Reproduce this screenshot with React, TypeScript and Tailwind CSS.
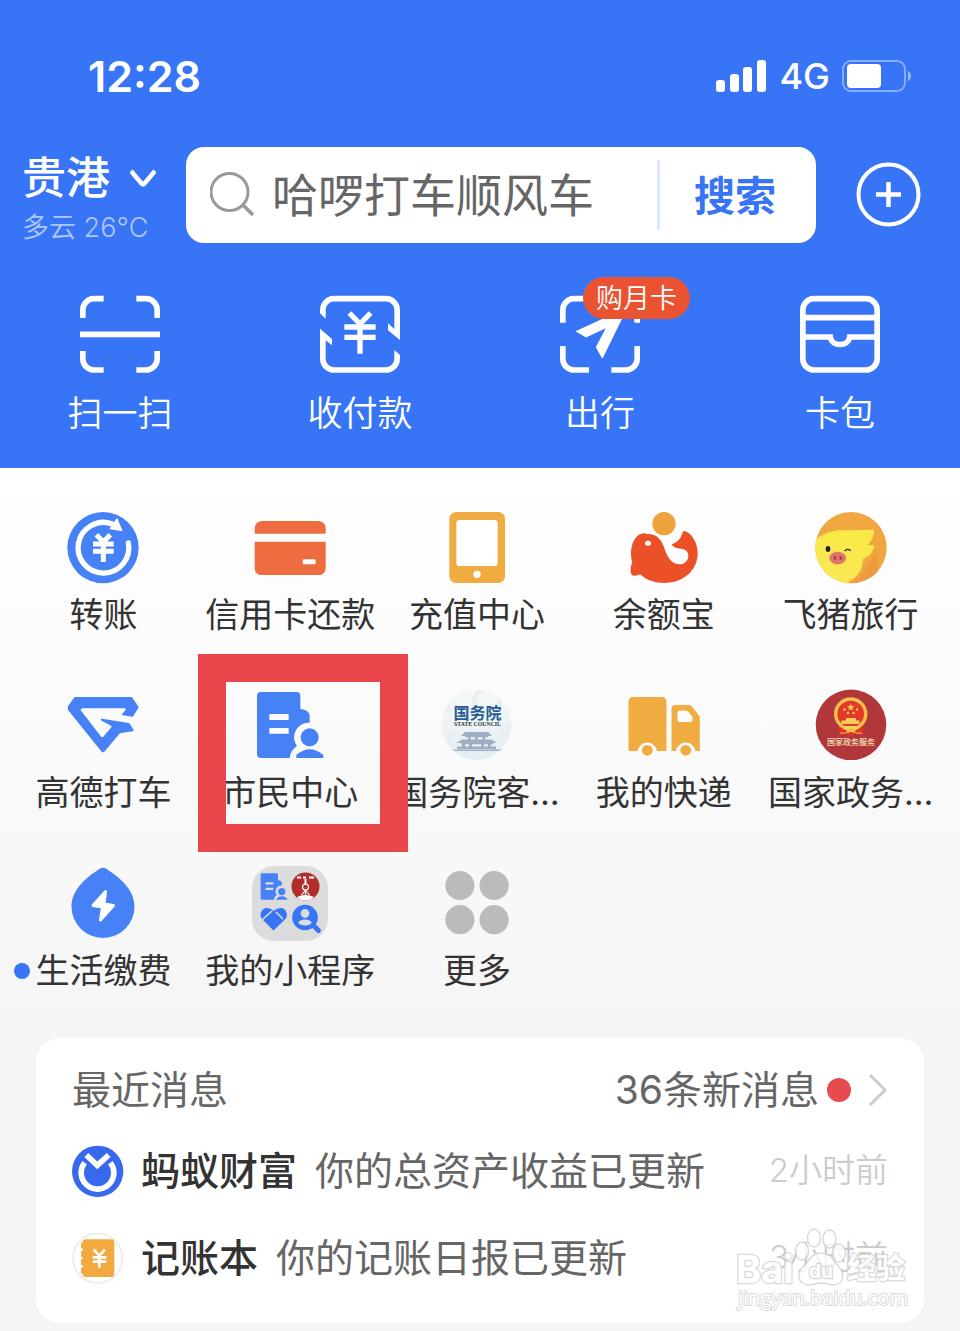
import type { ReactNode } from "react";

const BLUE = "#3875f6";

function StatusBar() {
  return (
    <div className="flex h-14 items-center justify-between pl-[88px] pr-12">
      <span className="text-[43px] leading-none font-semibold">12:28</span>
      <div className="flex items-center gap-3">
        <svg className="h-8 w-[52px]" viewBox="0 0 52 32" fill="currentColor" aria-hidden="true">
          <rect x="1" y="20" width="9" height="12" rx="3" />
          <rect x="15" y="14" width="9" height="18" rx="3" />
          <rect x="28" y="7" width="9" height="25" rx="3" />
          <rect x="42" y="0" width="9" height="32" rx="3" />
        </svg>
        <span className="text-[36px] leading-none font-medium">4G</span>
        <svg className="h-[33px] w-[70px]" viewBox="0 0 70 33" fill="none" aria-hidden="true">
          <rect x="1" y="1" width="62" height="30" rx="8" stroke="#fff" strokeOpacity="0.4" strokeWidth="2" />
          <rect x="5" y="4" width="34" height="24" rx="4" fill="#fff" />
          <path d="M66 11v10c4-2 4-8 0-10z" fill="#fff" fillOpacity="0.5" />
        </svg>
      </div>
    </div>
  );
}

function SearchRow() {
  return (
    <div className="flex items-start pl-[22px] pr-[38px]">
      <div className="w-[164px] shrink-0 pt-1">
        <button type="button" className="flex items-center gap-5 text-[44px] leading-[54px] font-medium">
          贵港
          <svg className="h-[18px] w-[26px]" viewBox="0 0 26 18" fill="none" aria-hidden="true">
            <path d="M1 2 11.500 14.500Q13 16 14.500 14.500L25 2" stroke="#fff" strokeWidth="4.500" />
          </svg>
        </button>
        <p className="text-[27px] leading-[46px] font-[350] text-white/60">多云 26°C</p>
      </div>
      <form className="flex h-24 min-w-0 flex-1 items-center rounded-[18px] bg-white pl-6" onSubmit={(e) => e.preventDefault()}>
        <svg className="size-[46px] shrink-0" viewBox="0 0 46 46" fill="none" stroke="#999" strokeWidth="3" aria-hidden="true">
          <circle cx="19.500" cy="20" r="18.500" />
          <path d="m33 33 10 10" strokeWidth="3.500" />
        </svg>
        <input
          type="search"
          aria-label="搜索"
          placeholder="哈啰打车顺风车"
          className="ml-4 min-w-0 flex-1 bg-transparent text-[46px] font-normal text-[#666] outline-none placeholder:text-[#666]"
        />
        <div className="h-[70px] w-[3px] shrink-0 rounded-full bg-[#dfe9fd]" />
        <button type="submit" className="w-[156px] shrink-0 pt-1 pr-1.5 text-center text-[41px] font-bold text-[#3875f6]">
          搜索
        </button>
      </form>
      <button type="button" aria-label="更多功能" className="ml-10 flex h-24 shrink-0 items-center">
        <svg className="size-[66px]" viewBox="0 0 66 66" fill="none" stroke="#fff" strokeWidth="4" aria-hidden="true">
          <circle cx="32.500" cy="32.500" r="30" />
          <path d="M32.500 20v25M20 32.500h25" strokeWidth="4.500" />
        </svg>
      </button>
    </div>
  );
}

function LineIcon({ children }: { children: ReactNode }) {
  return (
    <svg className="size-20" viewBox="0 0 240 240" fill="none" stroke="#fff" strokeWidth="17" aria-hidden="true">
      {children}
    </svg>
  );
}

const quickActions: { label: string; badge?: string; icon: ReactNode }[] = [
  {
    label: "扫一扫",
    icon: (
      <LineIcon>
        <path d="M8.500 69V45a34 34 0 0 1 34-34H71M169 11h28.500a34 34 0 0 1 34 34v24M231.500 168v23a34 34 0 0 1-34 34H169M71 225H42.500a34 34 0 0 1-34-34v-23M0 118h240" />
      </LineIcon>
    ),
  },
  {
    label: "收付款",
    icon: (
      <LineIcon>
        <path d="M8.500 54V45a34 34 0 0 1 34-34h155a34 34 0 0 1 34 34v60M231.500 182v9a34 34 0 0 1-34 34h-155a34 34 0 0 1-34-34v-60" />
        <g fill="#fff" stroke="none">
          <path d="M0 52h17v19L0 55zM240 100v35l-36-29V85l19 17zM0 135v-34l36 31v19l-19-15zM223 184v-19l17 15v6z" />
        </g>
        <path d="m88 54 32 33 32-33M120 84v92M73 96h94M73 127h94" strokeWidth="16" />
      </LineIcon>
    ),
  },
  {
    label: "出行",
    badge: "购月卡",
    icon: (
      <LineIcon>
        <path d="M8.500 83V45a34 34 0 0 1 34-34H87M154 11h43.500a34 34 0 0 1 34 34v38M231.500 153v38a34 34 0 0 1-34 34H154M87 225H42.500a34 34 0 0 1-34-34v-38" />
        <path d="m49 109 81-37 68-28-71 145-18-32 31-60-62 29z" fill="#fff" stroke="#fff" strokeWidth="3" strokeLinejoin="round" />
      </LineIcon>
    ),
  },
  {
    label: "卡包",
    icon: (
      <LineIcon>
        <rect x="8.500" y="11" width="223" height="214" rx="34" />
        <path d="M8 68h224M8 126h83c4 30 54 30 58 0h83" />
      </LineIcon>
    ),
  },
];

function QuickActions() {
  return (
    <nav className="mt-11 grid grid-cols-4">
      {quickActions.map((item) => (
        <a key={item.label} href="#" className="flex flex-col items-center">
          <span className="relative">
            {item.icon}
            {item.badge ? (
              <span className="absolute -top-[18px] left-[23px] h-[42px] rounded-full bg-[#ea5332] px-[13px] pt-px text-[27px] leading-[42px] font-[350] whitespace-nowrap">
                {item.badge}
              </span>
            ) : null}
          </span>
          <span className="mt-[14px] text-[35px] leading-[48px] font-[350]">{item.label}</span>
        </a>
      ))}
    </nav>
  );
}

function AppIcon({ box = 228, children }: { box?: 76 | 228; children: ReactNode }) {
  return (
    <svg className="size-[76px]" viewBox={`0 0 ${box} ${box}`} aria-hidden="true">
      {children}
    </svg>
  );
}

function CitizenShape() {
  return (
    <g fill="#4682f6">
      <path
        fillRule="evenodd"
        d="M27 12h106q12 0 12 12v39q13 1 21 7 7 6 7 16v18a44 44 0 0 0-38 70q-20 13-22 36H27q-12 0-12-12V24q0-12 12-12zM52 78v18h58V78zm0 42v17h58v-17z"
      />
      <circle cx="173" cy="148" r="27" />
      <path d="M133 210v-9q40-34 81 0v9z" />
    </g>
  );
}

const apps: { label: string; dot?: boolean; highlighted?: boolean; icon: ReactNode }[] = [
  {
    label: "转账",
    icon: (
      <AppIcon>
        <circle cx="114" cy="113" r="107" fill="#4682f6" />
        <g fill="none" stroke="#fff" strokeWidth="16">
          <path d="M190 99A76 76 0 1 1 142 42" strokeLinecap="round" />
          <path d="m94 74 21 22 21-22M115 90v66M84 102h62M84 124h62" strokeWidth="15" />
        </g>
        <path d="m156 26 15 36-36-6z" fill="#fff" stroke="#fff" strokeWidth="3" strokeLinejoin="round" />
      </AppIcon>
    ),
  },
  {
    label: "信用卡还款",
    icon: (
      <AppIcon>
        <path d="M30 33h169q22 2 22 24v14H8V57q0-22 22-24zM8 95h213v78q0 22-22 22H30q-22 0-22-22zM156 148q-4 0-4 4v7q0 4 4 4h31q4 0 4-4v-7q0-4-4-4z" fill="#ed6d41" fillRule="evenodd" />
      </AppIcon>
    ),
  },
  {
    label: "充值中心",
    icon: (
      <AppIcon>
        <rect x="31" y="6" width="167" height="213" rx="20" fill="#f1ac41" />
        <rect x="52" y="30" width="124" height="138" rx="10" fill="#fff" />
        <circle cx="114" cy="193" r="11" fill="#fff" />
      </AppIcon>
    ),
  },
  {
    label: "余额宝",
    icon: (
      <AppIcon>
        <circle cx="114" cy="41" r="35" fill="#efa33c" />
        <path
          d="M51 70C30 72 15 100 15 130c0 12 2 22 4 28-7 12-6 28-3 34 5 9 19 5 27 1 18 18 44 26 72 26 57 0 100-38 100-89 0-35-20-60-38-67-6 0-8 5-10 12-5 15-15 22-30 28 4 9 13 13 28 13 16 1 23 11 22 24-2 15-16 24-29 23-22-1-35-23-43-48-9-30-26-45-53-43-4-2-8-3-11-2z"
          fill="#eb5027"
        />
        <ellipse cx="66" cy="100" rx="9" ry="8" fill="#fff" />
      </AppIcon>
    ),
  },
  {
    label: "飞猪旅行",
    icon: (
      <AppIcon>
        <defs>
          <clipPath id="pig-clip">
            <circle cx="114" cy="113" r="107" />
          </clipPath>
          <linearGradient id="pig-face" x1="0" y1="1" x2="0.500" y2="0">
            <stop offset="0" stopColor="#fbe65a" />
            <stop offset="1" stopColor="#f9ea46" />
          </linearGradient>
        </defs>
        <g clipPath="url(#pig-clip)">
          <path d="M0 0h228v228H0z" fill="#f0a740" />
          <path d="M96 228c60-20 70-80 94-100l10 90z" fill="#ee9b40" />
          <path d="M0 96C30 68 60 60 100 61l83-2c0 22-8 36-21 46l22 1c-3 20-14 34-34 40 0 36-20 60-56 76L0 228z" fill="url(#pig-face)" />
        </g>
        <ellipse cx="45" cy="117" rx="7" ry="9" fill="#222" />
        <path d="M95 123q8-9 18-1" stroke="#222" strokeWidth="4" fill="none" />
        <ellipse cx="74" cy="144" rx="25" ry="19" fill="#e0756c" />
        <ellipse cx="66" cy="144" rx="4" ry="7" fill="#a9453f" />
        <ellipse cx="83" cy="144" rx="4" ry="7" fill="#a9453f" />
      </AppIcon>
    ),
  },
  {
    label: "高德打车",
    icon: (
      <AppIcon>
        <path
          d="m11 57 19-27h169l19 28-16 25-28-4 12-13-4-8H49l-6 8 65 84h8l26-31v-7l-32-17 81 13 12 19-40 6-48 57h-2L12 65z"
          fill="#4682f6"
          stroke="#4682f6"
          strokeWidth="6"
          strokeLinejoin="round"
        />
      </AppIcon>
    ),
  },
  {
    label: "市民中心",
    highlighted: true,
    icon: (
      <AppIcon>
        <CitizenShape />
      </AppIcon>
    ),
  },
  {
    label: "国务院客…",
    icon: (
      <AppIcon box={76}>
        <defs>
          <linearGradient id="council-bg" x1="0" y1="0" x2="0" y2="1">
            <stop offset="0" stopColor="#f7f8f8" />
            <stop offset="1" stopColor="#e2edf2" />
          </linearGradient>
          <clipPath id="council-clip">
            <circle cx="37.500" cy="36.800" r="35" />
          </clipPath>
        </defs>
        <g clipPath="url(#council-clip)">
          <path d="M0 0h76v76H0z" fill="url(#council-bg)" />
          <g fill="none" stroke="#e9eef0" strokeWidth="4">
            <path d="M22 2c-12 8-16 16-10 24" />
            <circle cx="48" cy="14" r="13" />
            <path d="m58 34 7 18 8-18" />
            <path d="M24 48c-9-5-14 0-13 6s8 9 14 4" strokeWidth="2.500" />
          </g>
        </g>
        <text x="38.500" y="30.500" textAnchor="middle" fontSize="16" fontWeight="700" fill="#275a93">国务院</text>
        <text x="38.500" y="38" textAnchor="middle" fontSize="5.800" fontWeight="700" fill="#333" className="font-['Liberation_Serif',serif]">STATE COUNCIL</text>
        <g fill="#a0aec3">
          <path d="M26 44h23l4 4H22zM23 51.500h30l5 3.500H17zM18 58.500h39V61H18zM26 48h23v1.200H26zM29 48h2.500v4H29zM43.500 48H46v4h-2.500zM36 48h3v4h-3zM22 55h32v1.200H22zM23 55h3v4h-3zM49 55h3v4h-3zM30 55h3v4h-3zM42 55h3v4h-3zM13 61.500h50l-3 1.500H16z" />
        </g>
      </AppIcon>
    ),
  },
  {
    label: "我的快递",
    icon: (
      <AppIcon box={76}>
        <g fill="#f1ac41">
          <path d="M2.500 63V14q0-5 5-5h28q5 0 5 5v49H31a9.800 9.800 0 0 0-19.400 0z" />
          <path
            fillRule="evenodd"
            d="M45.500 63V21q0-4 4-4H63q2 0 3 1.500l7 9q.8 1 .8 3V63h-4.400a9.800 9.800 0 0 0-19.400 0zM54 22.500q-2.500 0-2.500 2.500v6.500q0 2.500 2.500 2.500h10q2.500 0 2.500-2.500V29l-4-5q-1-1.500-3-1.500z"
          />
          <circle cx="21.300" cy="62.300" r="5.400" />
          <circle cx="59.700" cy="62.300" r="5.400" />
        </g>
      </AppIcon>
    ),
  },
  {
    label: "国家政务…",
    icon: (
      <AppIcon box={76}>
        <circle cx="38" cy="36.800" r="35.300" fill="#b1373b" />
        <path d="M25 38h26l-1 9-6-1-6 2-6-2-6 1z" fill="#df3328" />
        <circle cx="37.700" cy="26" r="15" fill="#e2392b" stroke="#f2c14c" strokeWidth="3.400" />
        <path d="m37.700 15.500 1 2.600 2.800.1-2.200 1.700.8 2.700-2.400-1.600-2.300 1.600.8-2.700-2.300-1.700 2.800-.1z" fill="#f6cd55" />
        <g fill="#f6cd55">
          <circle cx="31.500" cy="21.500" r="1.200" />
          <circle cx="44" cy="21.500" r="1.200" />
          <circle cx="35" cy="25" r="1.200" />
          <circle cx="40.500" cy="25" r="1.200" />
          <path d="M33 30h10v2.500h3.500V36h-18v-3.500H33z" />
          <path d="M28 38h20l-4 3.500H32z" />
        </g>
        <path d="M33 42q5-3 10 0l-2 3q-3-2-6 0z" fill="#f2c14c" />
        <path d="M27 45q5 1 8-1M41 44q4 2 8 1" stroke="#f2c14c" strokeWidth="1" fill="none" />
        <text x="38" y="56.500" textAnchor="middle" fontSize="8" fontWeight="500" fill="#f7e2b0">国家政务服务</text>
      </AppIcon>
    ),
  },
  {
    label: "生活缴费",
    dot: true,
    icon: (
      <AppIcon box={76}>
        <path d="M34.800 2.800q3.200-2 6.400 0C55 11.500 69.500 24 69.500 40.500a31.500 31.500 0 0 1-63 0C6.500 24 21 11.500 34.800 2.800z" fill="#4682f6" />
        <path d="M40.500 25.500 28 39.500l9.500 1.500-2 13L48.500 39.500 39 38z" fill="#fff" stroke="#fff" strokeWidth="3" strokeLinejoin="round" />
      </AppIcon>
    ),
  },
  {
    label: "我的小程序",
    icon: (
      <AppIcon box={76}>
        <rect width="76" height="75" rx="22" fill="#dcdcdc" />
        <g transform="translate(6.600 5.700) scale(.134)">
          <CitizenShape />
        </g>
        <circle cx="53.500" cy="20.500" r="14" fill="#b02f2c" />
        <g stroke="#fff" fill="none" strokeWidth="1.200">
          <path d="M45 11.500h4m2 0h3m3 0h5M53.500 13v6" strokeWidth="2" />
          <circle cx="53.500" cy="21" r="3" />
          <path d="m53.500 24-4 5m4-5 4 5m-4-5v6" />
        </g>
        <path d="M45 31q8-4 17 0-3 3.500-8.500 3.500T45 31z" fill="#fff" />
        <path d="M21.500 64.500 10 53c-3-4-1-10 4-11 3 0 6 1 7.500 3 2-2 5-3 8-3 5 1 7 7 4 11z" fill={BLUE} />
        <path d="m10 54 10-9M24 46l7 7" stroke="#dcdcdc" strokeWidth="1.600" />
        <circle cx="53" cy="51.500" r="12.800" fill={BLUE} />
        <path d="m62 60 4.500 4.500" stroke={BLUE} strokeWidth="5" strokeLinecap="round" />
        <circle cx="53" cy="47.500" r="4.400" fill="#dcdcdc" />
        <ellipse cx="53" cy="56.500" rx="6.500" ry="3" fill="#dcdcdc" />
      </AppIcon>
    ),
  },
  {
    label: "更多",
    icon: (
      <AppIcon box={76}>
        <g fill="#bbb">
          <circle cx="20.900" cy="19.500" r="14.600" />
          <circle cx="55.100" cy="19.500" r="14.600" />
          <circle cx="20.900" cy="53.700" r="14.600" />
          <circle cx="55.100" cy="53.700" r="14.600" />
        </g>
      </AppIcon>
    ),
  },
];

function AppGrid() {
  return (
    <nav className="grid grid-cols-5 gap-y-[53px] bg-linear-to-b from-white to-[#f5f5f5] pt-[42px] pr-4 pb-[47px] pl-[10px]">
      {apps.map((app) => (
        <a key={app.label} href="#" className="relative flex flex-col items-center">
          {app.icon}
          <span className="relative mt-[9px] text-[34px] leading-10 font-normal whitespace-nowrap text-[#333]">
            {app.dot ? <i className="absolute top-3 -left-[21px] size-4 rounded-full bg-[#3875f6]" /> : null}
            {app.label}
          </span>
          {app.highlighted ? (
            <span className="absolute -top-[34px] left-px z-10 h-[198px] w-[210px] border-[28px] border-[#e9464b]" />
          ) : null}
        </a>
      ))}
    </nav>
  );
}

const messages = [
  {
    name: "蚂蚁财富",
    text: "你的总资产收益已更新",
    time: "2小时前",
    icon: (
      <svg className="size-[52px]" viewBox="0 0 156 156" fill="none" aria-hidden="true">
        <circle cx="77" cy="79" r="77" fill="#3669ee" />
        <g stroke="#fff" strokeWidth="17">
          <path d="M38 53A49 49 0 1 0 115 53" />
          <path d="m43 30 33 31 34-31" />
        </g>
      </svg>
    ),
  },
  {
    name: "记账本",
    text: "你的记账日报已更新",
    time: "3小时前",
    icon: (
      <svg className="size-[52px]" viewBox="0 0 156 156" fill="none" aria-hidden="true">
        <circle cx="77" cy="79" r="74" fill="#fff" stroke="#ececec" strokeWidth="5" />
        <rect x="32" y="22" width="95" height="113" rx="10" fill="#f2aa40" />
        <path d="M33 32v94" stroke="#f2aa40" strokeWidth="12" strokeDasharray="17 8" />
        <path d="m65 53 17 18 17-18M82 68v39M62 76h41M62 89h41" stroke="#fff" strokeWidth="8" />
      </svg>
    ),
  },
];

function Watermark() {
  return (
    <svg
      className="pointer-events-none absolute right-[14px] bottom-[10px] h-[88px] w-[175px]"
      viewBox="0 0 175 88"
      fill="#fff"
      stroke="#d2d2d2"
      strokeWidth="1.500"
      opacity="0.800"
      aria-hidden="true"
    >
      <ellipse cx="67" cy="26" rx="6.500" ry="9" />
      <ellipse cx="79" cy="13" rx="6.500" ry="9" />
      <ellipse cx="94.500" cy="14" rx="6.500" ry="9" />
      <ellipse cx="104" cy="28" rx="6.500" ry="9" />
      <path d="M86 28c-11 0-12 9-18 14s-6 17 5 18c5 0 8-2 13-2s8 2 13 2c11-1 10-13 5-18s-7-14-18-14z" />
      <g fontWeight="700" paintOrder="stroke" strokeWidth="2.500">
        <text x="1" y="58" fontSize="38">Bai</text>
        <text x="74" y="53" fontSize="19">du</text>
        <text x="112" y="54" fontSize="29">经验</text>
      </g>
      <text x="3" y="80" fontSize="20" fontWeight="500" strokeWidth="2" paintOrder="stroke" className="font-['Open_Sans',sans-serif]">
        jingyan.baidu.com
      </text>
    </svg>
  );
}

function MessageCard() {
  return (
    <section className="relative mx-9 rounded-3xl bg-white px-9 pt-6 pb-[39px] text-[39px] font-normal text-[#666]">
      <div className="flex items-center justify-between leading-[56px]">
        <h2>最近消息</h2>
        <a href="#" className="flex items-center">
          36条新消息
          <i className="ml-2 size-6 rounded-full bg-[#e64b50]" />
          <svg className="ml-[17px] h-8 w-5" viewBox="0 0 20 32" fill="none" aria-hidden="true">
            <path d="m2 1 15 15L2 31" stroke="#ccc" strokeWidth="3" />
          </svg>
        </a>
      </div>
      <ul className="mt-[27px] flex flex-col gap-[35px]">
        {messages.map((message) => (
          <li key={message.name} className="flex h-[52px] items-center">
            {message.icon}
            <strong className="ml-[17px] font-medium text-[#333]">{message.name}</strong>
            <span className="ml-[18px]">{message.text}</span>
            <time className="ml-auto text-[33px] font-[350] text-[#ccc]">{message.time}</time>
          </li>
        ))}
      </ul>
      <Watermark />
    </section>
  );
}

export default function App() {
  return (
    <div className="min-h-screen bg-[#f5f5f5] pb-2 font-['Inter','Noto_Sans_CJK_SC',sans-serif]">
      <header className="bg-[#3875f6] pt-12 pb-[31px] text-white">
        <StatusBar />
        <div className="mt-[43px]">
          <SearchRow />
        </div>
        <QuickActions />
      </header>
      <main>
        <AppGrid />
        <MessageCard />
      </main>
    </div>
  );
}
